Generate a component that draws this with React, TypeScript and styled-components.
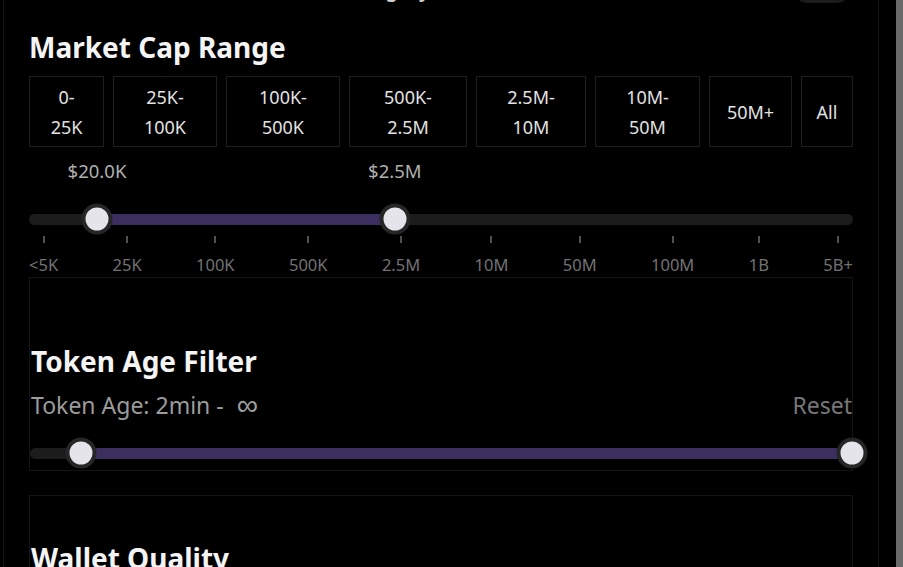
import styled, { createGlobalStyle } from "styled-components";

const GlobalStyle = createGlobalStyle`
  html, body {
    margin: 0;
    background: #000;
    overflow: hidden;
  }
  body {
    font-family: "Noto Sans", "Open Sans", sans-serif;
    color: #e6e6e6;
  }
`;

const Screen = styled.div`
  display: flex;
  height: 567px;
  overflow: hidden;
  background: #000;
`;

const Panel = styled.div`
  margin-left: 3px;
  width: 876px;
  box-sizing: border-box;
  border-left: 1px solid #141414;
  border-right: 1px solid #141414;
  padding: 0 25px;
`;

const Scrolled = styled.div`
  margin-top: -26px;
`;

const Scrollbar = styled.div`
  margin-left: auto;
  width: 7px;
  background: #6a6a6a;
`;

const HeaderRow = styled.div`
  display: grid;
  grid-template-columns: 1fr auto;
  align-items: center;
  height: 32px;
  padding-right: 3px;
`;

const HeaderLabel = styled.span`
  text-align: center;
  padding-right: 52px;
  font-size: 20px;
  line-height: 32px;
  color: #d0d0d0;
  font-weight: 600;
`;

const Pill = styled.div`
  width: 56px;
  height: 26px;
  border-radius: 13px;
  background: #1c1c1c;
`;

const Title = styled.h2`
  margin: 24px 0 0;
  font-size: 28px;
  line-height: 34px;
  font-weight: 700;
  color: #f4f4f4;
`;

const RangeButtons = styled.div`
  display: grid;
  grid-template-columns: 75px 104px 114px 118px 110px 105px 83px 52px;
  gap: 9px;
  margin-top: 12px;
`;

const RangeButton = styled.button`
  height: 71px;
  box-sizing: border-box;
  border: 1px solid #1f1f1f;
  background: transparent;
  color: #e2e2e2;
  font-family: inherit;
  font-size: 18px;
  line-height: 30px;
  padding: 0;
  white-space: pre-line;
  text-align: center;
`;

const ValueRow = styled.div`
  position: relative;
  height: 24px;
  margin-top: 12px;
`;

const ValueLabel = styled.span`
  position: absolute;
  top: 0;
  transform: translateX(-50%);
  font-size: 18.5px;
  line-height: 24px;
  color: #b0b0b0;
  white-space: nowrap;
`;

const SliderRow = styled.div<{ $gap: number }>`
  display: flex;
  align-items: center;
  height: 32px;
  margin-top: ${(p) => p.$gap}px;
`;

const Track = styled.div`
  position: relative;
  flex: 1;
  height: 11px;
  border-radius: 6px;
  background: #1c1c1c;
`;

const Fill = styled.div`
  position: absolute;
  top: 0;
  bottom: 0;
  background: #3d2e60;
`;

const Thumb = styled.div`
  position: absolute;
  top: 50%;
  width: 23px;
  height: 23px;
  border-radius: 50%;
  background: #e4e4ea;
  border: 4px solid #262626;
  transform: translate(-50%, -50%);
`;

const Scale = styled.div`
  display: flex;
  justify-content: space-between;
`;

const ScaleItem = styled.div`
  display: flex;
  flex-direction: column;
  align-items: center;
`;

const Tick = styled.div`
  width: 2px;
  height: 7px;
  margin-top: 1px;
  background: #505050;
`;

const TickLabel = styled.span`
  margin-top: 12px;
  font-size: 16.5px;
  line-height: 20px;
  color: #727272;
`;

const Section = styled.div<{ $pad: number }>`
  border: 1px solid #141414;
  padding-top: ${(p) => p.$pad}px;
  padding-bottom: 1px;
  margin-top: 2px;
  & + & {
    margin-top: 24px;
  }
`;

const SectionTitle = styled(Title)`
  margin: 0 0 0 1px;
`;

const AgeRow = styled.div`
  display: flex;
  justify-content: space-between;
  margin-top: 13px;
  padding-left: 1px;
  font-size: 23px;
  line-height: 28px;
`;

const AgeValue = styled.span`
  color: #9c9c9c;
`;

const Infinity = styled.span`
  margin-left: 13px;
  font-family: "Liberation Sans", "DejaVu Sans", sans-serif;
  font-size: 1.3em;
  line-height: 0;
  vertical-align: -1px;
`;

const Reset = styled.span`
  color: #777;
`;

const ranges = [
  "0-\n25K",
  "25K-\n100K",
  "100K-\n500K",
  "500K-\n2.5M",
  "2.5M-\n10M",
  "10M-\n50M",
  "50M+",
  "All",
];

const scale = ["<5K", "25K", "100K", "500K", "2.5M", "10M", "50M", "100M", "1B", "5B+"];

const capLow = 8.25;
const capHigh = 44.4;
const ageLow = 6.2;
const ageHigh = 100;

const App = () => {
  return (
    <Screen>
      <GlobalStyle />
      <Panel>
        <Scrolled>
          <HeaderRow>
            <HeaderLabel>Category</HeaderLabel>
            <Pill />
          </HeaderRow>

          <Title>Market Cap Range</Title>
          <RangeButtons>
            {ranges.map((r) => (
              <RangeButton key={r}>{r}</RangeButton>
            ))}
          </RangeButtons>

          <ValueRow>
            <ValueLabel style={{ left: `${capLow}%` }}>$20.0K</ValueLabel>
            <ValueLabel style={{ left: `${capHigh}%` }}>$2.5M</ValueLabel>
          </ValueRow>
          <SliderRow $gap={20}>
            <Track>
              <Fill style={{ left: `${capLow}%`, width: `${capHigh - capLow}%` }} />
              <Thumb style={{ left: `${capLow}%` }} />
              <Thumb style={{ left: `${capHigh}%` }} />
            </Track>
          </SliderRow>
          <Scale>
            {scale.map((s) => (
              <ScaleItem key={s}>
                <Tick />
                <TickLabel>{s}</TickLabel>
              </ScaleItem>
            ))}
          </Scale>

          <Section $pad={66}>
            <SectionTitle>Token Age Filter</SectionTitle>
            <AgeRow>
              <AgeValue>
                Token Age: 2min -<Infinity>∞</Infinity>
              </AgeValue>
              <Reset>Reset</Reset>
            </AgeRow>
            <SliderRow $gap={18}>
              <Track>
                <Fill style={{ left: `${ageLow}%`, width: `${ageHigh - ageLow}%` }} />
                <Thumb style={{ left: `${ageLow}%` }} />
                <Thumb style={{ left: `${ageHigh}%` }} />
              </Track>
            </SliderRow>
          </Section>

          <Section $pad={45}>
            <SectionTitle>Wallet Quality</SectionTitle>
          </Section>
        </Scrolled>
      </Panel>
      <Scrollbar />
    </Screen>
  );
};

export default App;
